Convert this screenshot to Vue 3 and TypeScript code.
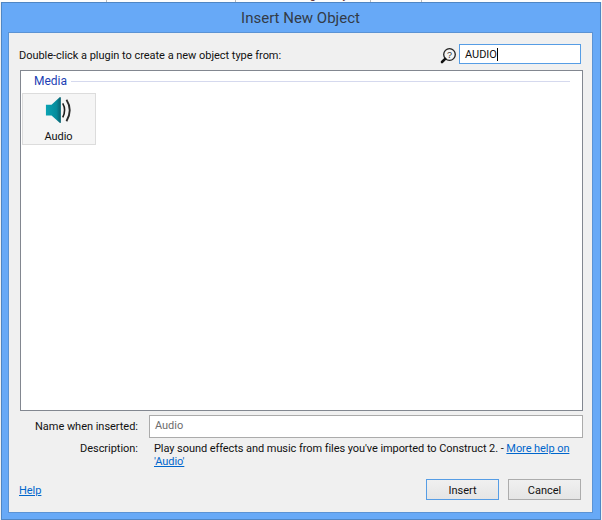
<script setup lang="ts">
interface BehindCell {
  width: number
  labels: string[]
  cls: string
}
const cells: BehindCell[] = [
  { width: 107, labels: [], cls: '' },
  { width: 129, labels: ['Sound'], cls: 'end' },
  { width: 135, labels: ['Add', 'Debug', 'Layout'], cls: 'spread' },
  { width: 51, labels: ['Size'], cls: 'mid' }
]
</script>

<template>
  <div class="page">
    <div class="behind">
      <div v-for="(c, i) in cells" :key="i" class="cell" :class="c.cls" :style="{ width: c.width + 'px' }">
        <span v-for="l in c.labels" :key="l">{{ l }}</span>
      </div>
    </div>
    <div class="window">
      <div class="titlebar">Insert New Object</div>
      <div class="client">
        <div class="top-row">
          <span class="prompt">Double-click a plugin to create a new object type from:</span>
          <div class="search">
            <svg class="lens" width="18" height="18" viewBox="0 0 18 18">
              <circle cx="10.5" cy="7.5" r="5.8" fill="#f4f4f4" stroke="#222" stroke-width="1.3" />
              <path d="M6.2 11.8 L3 15" stroke="#111" stroke-width="2.6" stroke-linecap="round" />
              <text x="10.5" y="10.8" font-size="9" text-anchor="middle" fill="#333" font-family="Liberation Sans, sans-serif">?</text>
            </svg>
            <div class="search-box">AUDIO<span class="caret"></span></div>
          </div>
        </div>
        <div class="list">
          <div class="group">
            <span class="group-name">Media</span>
            <span class="group-line"></span>
          </div>
          <div class="tile">
            <svg class="speaker" width="30" height="30" viewBox="0 0 30 30">
              <defs>
                <linearGradient id="cone" x1="0" y1="0" x2="1" y2="0">
                  <stop offset="0" stop-color="#0aa3b3" />
                  <stop offset="0.7" stop-color="#068c9c" />
                  <stop offset="1" stop-color="#0b5f6d" />
                </linearGradient>
              </defs>
              <path d="M1 9.5 L7 9.5 L16 1 Q17 1 17 2 L17 28 Q17 29 16 29 L7 21 L1 21 Z" fill="url(#cone)" />
              <path d="M19 8 Q23 15 19 23" fill="none" stroke="#1c1c1c" stroke-width="1.7" />
              <path d="M23 4 Q30 15 23 27" fill="none" stroke="#2a2a2a" stroke-width="2" />
            </svg>
            <span class="tile-label">Audio</span>
          </div>
        </div>
        <div class="name-row">
          <span class="field-label">Name when inserted:</span>
          <div class="name-box">Audio</div>
        </div>
        <div class="desc-row">
          <span class="field-label">Description:</span>
          <p class="desc">Play sound effects and music from files you've imported to Construct 2. - <a class="link">More help on 'Audio'</a></p>
        </div>
        <div class="footer">
          <a class="link help">Help</a>
          <div class="buttons">
            <button class="btn primary">Insert</button>
            <button class="btn">Cancel</button>
          </div>
        </div>
      </div>
    </div>
  </div>
</template>

<style>
html, body { margin: 0; background: #f1f1f1; }
</style>

<style scoped>
.page {
  width: 602px;
  height: 520px;
  overflow: hidden;
  font-family: Roboto, "Noto Sans", sans-serif;
  font-size: 11px;
  letter-spacing: -0.03px;
  color: #111;
  box-sizing: border-box;
}
.behind {
  height: 2px;
  overflow: hidden;
  display: flex;
  background: #fdfdfd;
}
.cell {
  flex: none;
  height: 2px;
  box-sizing: border-box;
  border-right: 1px solid #b9b9b9;
  display: flex;
  font-size: 11px;
  line-height: 13px;
  color: #5a1f1f;
}
.cell span { display: block; margin-top: -11px; height: 13px; }
.cell.end { justify-content: flex-end; padding-right: 9px; }
.cell.spread { gap: 15px; padding-left: 14px; }
.cell.mid { justify-content: center; }
.window {
  margin-left: 1px;
  width: 600px;
  height: 518px;
  box-sizing: border-box;
  background: #67a9f7;
  border: 1px solid #4f86c4;
  padding: 0 7px 6px 6px;
  display: flex;
  flex-direction: column;
}
.titlebar {
  height: 29px;
  display: flex;
  align-items: center;
  justify-content: center;
  font-size: 15px;
  letter-spacing: 0;
  color: #333b47;
  flex: none;
}
.client {
  flex: 1;
  background: #f0f0f0;
  border: 1px solid #5b93d4;
  padding: 11px 9px 0 11px;
  display: flex;
  flex-direction: column;
  min-height: 0;
}
.top-row {
  display: flex;
  justify-content: space-between;
  align-items: center;
  height: 20px;
  padding-right: 2px;
}
.prompt { margin-left: -1px; padding-top: 2px; }
.search {
  display: flex;
  align-items: center;
  gap: 2px;
}
.lens { margin-top: 4px; }
.search-box {
  width: 122px;
  height: 20px;
  box-sizing: border-box;
  border: 1px solid #569de5;
  background: #fff;
  padding: 1px 0 0 5px;
  line-height: 18px;
  display: flex;
  align-items: center;
}
.caret {
  display: inline-block;
  width: 1px;
  height: 13px;
  background: #000;
}
.list {
  margin-top: 6px;
  height: 341px;
  flex: none;
  box-sizing: border-box;
  background: #fff;
  border: 1px solid #828790;
  padding: 2px 1px 0 1px;
}
.group {
  display: flex;
  align-items: center;
  gap: 4px;
  height: 16px;
  margin-bottom: 4px;
  padding: 0 11px 0 12px;
}
.group-name {
  color: #1c3fb4;
  font-size: 12px;
}
.group-line {
  flex: 1;
  height: 1px;
  background: #d5d9ee;
}
.tile {
  width: 74px;
  height: 52px;
  box-sizing: border-box;
  background: #f5f5f5;
  border: 1px solid #dcdcdc;
  display: flex;
  flex-direction: column;
  align-items: center;
}
.speaker { margin-top: 2px; margin-left: -1px; }
.tile-label { line-height: 15px; margin-top: 5px; margin-left: -1px; }
.name-row {
  display: flex;
  align-items: center;
  margin-top: 4px;
  height: 23px;
  flex: none;
}
.field-label {
  width: 118px;
  text-align: right;
  flex: none;
}
.name-box {
  margin-left: 11px;
  flex: 1;
  height: 23px;
  box-sizing: border-box;
  border: 1px solid #ababab;
  background: #fff;
  color: #6d6d6d;
  padding-left: 5px;
  line-height: 20px;
}
.desc-row {
  display: flex;
  align-items: flex-start;
  margin-top: 4px;
  line-height: 13px;
  flex: none;
}
.desc {
  margin: 0 12px 0 16px;
  flex: 1;
  letter-spacing: -0.07px;
}
.link {
  color: #0066cc;
  text-decoration: underline;
}
.footer {
  display: flex;
  justify-content: space-between;
  align-items: center;
  margin-top: 11px;
  padding-right: 2px;
  flex: none;
}
.help { margin-left: -1px; padding-top: 2px; }
.buttons {
  display: flex;
  gap: 9px;
}
.btn {
  width: 73px;
  height: 21px;
  box-sizing: border-box;
  border: 1px solid #acacac;
  background: linear-gradient(#f0f0f0, #e5e5e5);
  font: inherit;
  letter-spacing: inherit;
  color: #111;
  padding: 2px 0 0;
}
.btn.primary {
  border-color: #569de5;
}
</style>
